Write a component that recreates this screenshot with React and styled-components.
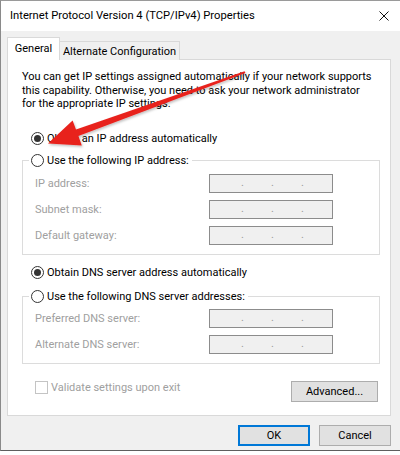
import React from 'react';
import styled, { createGlobalStyle } from 'styled-components';

const FONT = `Roboto, 'Noto Sans', 'Liberation Sans', sans-serif`;

const GlobalStyle = createGlobalStyle`
  html, body {
    margin: 0;
    background: #ffffff;
  }
  body {
    font-family: ${FONT};
    font-size: 11px;
    color: #000;
    overflow: hidden;
  }
`;

const Window = styled.div`
  position: relative;
  width: 400px;
  height: 451px;
  box-sizing: border-box;
  display: flex;
  flex-direction: column;
  background: #f0f0f0;
  border-left: 1px solid #8a8a8a;
  border-top: 1px solid #9a9a9a;
  border-bottom: 1px solid #5e5e5e;
`;

const TitleBar = styled.div`
  height: 30px;
  flex: none;
  background: #ffffff;
  display: flex;
  align-items: center;
  justify-content: space-between;
  padding: 0 11px 0 9px;
`;

const Title = styled.span`
  font-size: 11.2px;
  color: #000;
  margin-top: -1px;
`;

const Body = styled.div`
  display: flex;
  flex-direction: column;
  padding: 6px 9px 0 6px;
`;

const TabStrip = styled.div`
  display: flex;
  align-items: flex-end;
  height: 23px;
  margin-bottom: -1px;
  position: relative;
  z-index: 1;
`;

const Tab = styled.div`
  box-sizing: border-box;
  display: flex;
  align-items: center;
  justify-content: center;
  border: 1px solid #d9d9d9;
  border-bottom: none;
  background: ${(p) => (p.$active ? '#ffffff' : '#f0f0f0')};
  height: ${(p) => (p.$active ? '23px' : '19px')};
  width: ${(p) => p.$w}px;
  margin-left: ${(p) => (p.$active ? '0' : '-1px')};
  padding-bottom: ${(p) => (p.$active ? '1px' : '0')};
`;

const Panel = styled.div`
  box-sizing: border-box;
  width: 384px;
  background: #ffffff;
  border: 1px solid #d9d9d9;
  padding: 10px 10px 13px 14px;
  display: flex;
  flex-direction: column;
`;

const Intro = styled.p`
  margin: 0;
  line-height: 13.5px;
  white-space: nowrap;
`;

const RadioRow = styled.label`
  display: flex;
  align-items: center;
  gap: 3px;
  height: 16px;
  padding-left: 9px;
  margin-top: ${(p) => p.$top || 0}px;
`;

const Legend = styled.label`
  display: flex;
  align-items: center;
  gap: 3px;
  height: 16px;
  width: fit-content;
  margin: -8px 0 0 6px;
  padding: 0 3px 0 2px;
  background: #ffffff;
`;

const RadioDot = styled.span`
  box-sizing: border-box;
  width: 13px;
  height: 13px;
  border-radius: 50%;
  border: 1px solid #333333;
  background: #ffffff;
  display: flex;
  align-items: center;
  justify-content: center;
  flex: none;

  &::after {
    content: '';
    width: 7px;
    height: 7px;
    border-radius: 50%;
    background: #333333;
    display: ${(p) => (p.$checked ? 'block' : 'none')};
  }
`;

const Group = styled.div`
  border: 1px solid #dcdcdc;
  margin-top: ${(p) => p.$top}px;
  padding-bottom: 9px;
`;

const Fields = styled.div`
  display: grid;
  grid-template-columns: 174px 124px;
  grid-auto-rows: 19px;
  row-gap: ${(p) => p.$gap}px;
  padding: ${(p) => p.$pad}px 0 0 12px;
`;

const FieldLabel = styled.span`
  color: #a0a0a0;
  display: flex;
  align-items: center;
`;

const IpBox = styled.div`
  box-sizing: border-box;
  background: #f0f0f0;
  border: 1px solid #8c8c8c;
  display: flex;
  align-items: center;
  padding: 0 0 1px 31px;
  gap: 28px;
  color: #9a9a9a;
  font-size: 11px;
`;

const Dot = styled.span`
  width: 2px;
  text-align: center;
`;

const BottomRow = styled.div`
  display: flex;
  justify-content: space-between;
  align-items: flex-start;
  margin-top: 17px;
  padding: 0 2px 0 13px;
`;

const CheckLabel = styled.label`
  display: flex;
  align-items: center;
  gap: 3px;
  color: #a0a0a0;
  height: 13px;
`;

const CheckBox = styled.span`
  box-sizing: border-box;
  width: 13px;
  height: 13px;
  border: 1px solid #c4c4c4;
  background: #ffffff;
  flex: none;
`;

const Button = styled.button`
  box-sizing: border-box;
  width: ${(p) => p.$w}px;
  height: 21px;
  margin: 0;
  padding: 0;
  font-family: ${FONT};
  font-size: 11px;
  color: #000;
  background: #e1e1e1;
  border: ${(p) => (p.$default ? '2px solid #0078d7' : '1px solid #adadad')};
  border-radius: 0;
`;

const Footer = styled.div`
  display: flex;
  justify-content: flex-end;
  gap: 9px;
  margin-top: 9px;
`;

const Overlay = styled.svg`
  position: absolute;
  left: 0;
  top: 0;
  pointer-events: none;
`;

function Radio({ checked, children, top }) {
  return (
    <RadioRow $top={top}>
      <RadioDot $checked={checked} />
      {children}
    </RadioRow>
  );
}

function IpField() {
  return (
    <IpBox>
      <Dot>.</Dot>
      <Dot>.</Dot>
      <Dot>.</Dot>
    </IpBox>
  );
}

function FieldGroup({ legend, labels, top, pad, gap }) {
  return (
    <Group $top={top}>
      <Legend>
        <RadioDot />
        {legend}
      </Legend>
      <Fields $pad={pad} $gap={gap}>
        {labels.map((l) => (
          <React.Fragment key={l}>
            <FieldLabel>{l}</FieldLabel>
            <IpField />
          </React.Fragment>
        ))}
      </Fields>
    </Group>
  );
}

export default function App() {
  return (
    <>
      <GlobalStyle />
      <Window>
        <TitleBar>
          <Title>Internet Protocol Version 4 (TCP/IPv4) Properties</Title>
          <svg width="10" height="10" viewBox="0 0 10 10">
            <path d="M0.5 0.5 L9.5 9.5 M9.5 0.5 L0.5 9.5" stroke="#111" strokeWidth="1" />
          </svg>
        </TitleBar>
        <Body>
          <TabStrip>
            <Tab $active $w={53}>General</Tab>
            <Tab $w={121}>Alternate Configuration</Tab>
          </TabStrip>
          <Panel>
            <Intro>
              You can get IP settings assigned automatically if your network supports
              <br />
              this capability. Otherwise, you need to ask your network administrator
              <br />
              for the appropriate IP settings.
            </Intro>
            <Radio checked top={20}>Obtain an IP address automatically</Radio>
            <FieldGroup
              legend="Use the following IP address:"
              labels={['IP address:', 'Subnet mask:', 'Default gateway:']}
              top={13}
              pad={5}
              gap={7}
            />
            <Radio checked top={10}>Obtain DNS server address automatically</Radio>
            <FieldGroup
              legend="Use the following DNS server addresses:"
              labels={['Preferred DNS server:', 'Alternate DNS server:']}
              top={15}
              pad={4}
              gap={7}
            />
            <BottomRow>
              <CheckLabel>
                <CheckBox />
                Validate settings upon exit
              </CheckLabel>
              <Button $w={87}>Advanced...</Button>
            </BottomRow>
          </Panel>
          <Footer>
            <Button $w={72} $default>OK</Button>
            <Button $w={72}>Cancel</Button>
          </Footer>
        </Body>
        <Overlay width="400" height="451" viewBox="0 0 400 451">
          <defs>
            <filter id="arrowShadow" x="-10%" y="-10%" width="120%" height="130%">
              <feDropShadow dx="1" dy="1.5" stdDeviation="1" floodColor="#000" floodOpacity="0.25" />
            </filter>
          </defs>
          <polygon
            points="243.6,70.2 75,128.5 71.6,119.4 47,142.5 80.8,144.4 77.4,135.1 244.4,72"
            fill="#e8231f"
            filter="url(#arrowShadow)"
          />
        </Overlay>
      </Window>
    </>
  );
}
